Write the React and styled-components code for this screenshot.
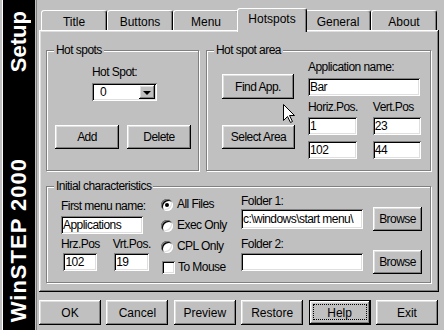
import React from 'react';
import styled, { createGlobalStyle, css } from 'styled-components';

const SANS = `"Liberation Sans", Arial, sans-serif`;
const NARROW = `"Liberation Sans Narrow", "Arial Narrow", "Liberation Sans", Arial, sans-serif`;

const GlobalStyle = createGlobalStyle`
  html, body { margin: 0; padding: 0; background: #c0c0c0; }
  body { font-family: ${SANS}; font-size: 12px; color: #000; }
  * { box-sizing: border-box; }
`;

const raised = css`
  box-shadow: inset -1px -1px #000, inset 1px 1px #fff, inset -2px -2px #808080, inset 2px 2px #dfdfdf;
`;
const sunken = css`
  box-shadow: inset 1px 1px #808080, inset -1px -1px #fff, inset 2px 2px #000, inset -2px -2px #dfdfdf;
`;
const small = css`
  font-family: ${NARROW};
  font-size: 12px;
  letter-spacing: -0.55px;
`;

const Window = styled.div`
  position: relative;
  width: 444px;
  height: 330px;
  display: flex;
  background: #c0c0c0;
  overflow: hidden;
`;

const SideBar = styled.div`
  margin-left: 2px;
  width: 33px;
  border-left: 1px solid #fff;
  background: #000;
  box-shadow: 1px 0 0 #c0c0c0, 2px 0 0 #808080;
  display: flex;
  flex-direction: column;
  justify-content: space-between;
  align-items: center;
  padding: 11px 0 8px;
`;

const SideText = styled.span`
  writing-mode: vertical-rl;
  transform: rotate(180deg);
  color: #fff;
  font: bold 22px/32px ${SANS};
  white-space: nowrap;
  letter-spacing: ${p => (p.$spaced ? '1px' : '0')};
`;

const Main = styled.div`
  margin-left: 4px;
  width: 400px;
  padding-top: 8px;
  display: flex;
  flex-direction: column;
`;

const TabRow = styled.div`
  height: 22px;
  display: flex;
  align-items: flex-end;
  padding-left: 2px;
`;

const Tab = styled.div`
  width: 66px;
  height: 20px;
  border: 1px solid;
  border-bottom: none;
  border-color: #fff #000 transparent #fff;
  border-radius: 3px 3px 0 0;
  box-shadow: inset -1px 0 #808080;
  background: #c0c0c0;
  text-align: center;
  padding-top: 4px;
  font: 12px/14px ${SANS};
  ${p => p.$active && css`
    position: relative;
    z-index: 1;
    width: 70px;
    height: 24px;
    margin: 0 -2px -2px;
    padding-top: 3px;
  `}
`;

const Panel = styled.div`
  height: 262px;
  background: #c0c0c0;
  ${raised};
  display: grid;
  grid-template-columns: 153px 225px;
  grid-template-rows: 121px 97px;
  column-gap: 7px;
  row-gap: 15px;
  padding: 20px 7px 0 7px;
`;

const Group = styled.div`
  position: relative;
  border: 1px solid #808080;
  box-shadow: inset 1px 1px #fff, 1px 1px #fff;
  ${p => p.$wide && css`grid-column: 1 / -1;`}
`;

const Caption = styled.span`
  position: absolute;
  top: -8px;
  left: 7px;
  padding: 0 2px;
  background: #c0c0c0;
  ${small};
  line-height: 15px;
  white-space: nowrap;
`;

const Label = styled.div`
  ${small};
  line-height: ${p => p.$lh || 15}px;
  white-space: nowrap;
`;

const Btn = styled.button`
  position: relative;
  width: ${p => p.$w}px;
  height: ${p => p.$h}px;
  margin: 0;
  padding: 0;
  border: none;
  background: #c0c0c0;
  ${raised};
  color: #000;
  font-family: ${SANS};
  font-size: 12px;
  flex: none;
  ${p => p.$narrow && small};
  ${p => p.$default && css`
    border: 1px solid #000;
    &::after {
      content: "";
      position: absolute;
      left: 3px;
      top: 3px;
      right: 3px;
      bottom: 4px;
      border: 1px dotted #000;
    }
  `}
`;

const Field = styled.input`
  display: block;
  width: ${p => p.$w}px;
  height: ${p => p.$h || 18}px;
  margin: ${p => p.$mt || 0}px 0 0;
  padding: 0 2px;
  border: none;
  outline: none;
  background: #fff;
  ${sunken};
  color: #000;
  ${small};
  flex: none;
`;

/* ---------- Hot spots group ---------- */
const HotSpotBody = styled.div`
  padding: 14px 0 0 8px;
  display: flex;
  flex-direction: column;
  align-items: flex-start;
`;

const ComboField = styled.div`
  margin-left: 37px;
`;

const Combo = styled.div`
  margin-top: 3px;
  width: 65px;
  height: 18px;
  padding: 2px;
  background: #fff;
  ${sunken};
  display: flex;
`;

const ComboValue = styled.span`
  flex: 1;
  padding-left: 6px;
  ${small};
  line-height: 14px;
`;

const ComboArrow = styled.span`
  width: 16px;
  height: 14px;
  background: #c0c0c0;
  ${raised};
  display: flex;
  align-items: center;
  justify-content: center;
  &::before {
    content: "";
    border-left: 4px solid transparent;
    border-right: 4px solid transparent;
    border-top: 4px solid #000;
    margin-top: 1px;
  }
`;

const ButtonRow = styled.div`
  display: flex;
  gap: 8px;
  margin-top: 24px;
`;

/* ---------- Hot spot area group ---------- */
const AreaBody = styled.div`
  display: grid;
  grid-template-columns: 73px 112px;
  column-gap: 13px;
  padding: 9px 0 0 15px;
`;

const AreaButtons = styled.div`
  display: flex;
  flex-direction: column;
  align-items: flex-start;
  gap: 26px;
  padding-top: 14px;
`;

const AreaFields = styled.div`
  display: flex;
  flex-direction: column;
`;

const PosGrid = styled.div`
  margin-top: 4px;
  display: flex;
  gap: 15px;
`;

const PosCol = styled.div`
  display: flex;
  flex-direction: column;
`;

/* ---------- Initial characteristics ---------- */
const InitBody = styled.div`
  display: flex;
  padding-left: 14px;
`;

const MenuCol = styled.div`
  width: 83px;
  padding-top: 12px;
  display: flex;
  flex-direction: column;
`;

const SubRow = styled.div`
  display: flex;
  gap: 13px;
  margin-top: 3px;
`;

const SubCol = styled.div`
  display: flex;
  flex-direction: column;
  align-items: center;
`;

const ChoiceCol = styled.div`
  width: 80px;
  margin-left: 17px;
  padding-top: 7px;
  display: flex;
  flex-direction: column;
`;

const Choice = styled.div`
  height: 21px;
  display: flex;
  align-items: center;
  gap: ${p => (p.$box ? 3 : 4)}px;
  padding-left: ${p => (p.$box ? 1 : 0)}px;
  ${small};
  line-height: 15px;
`;

const Radio = styled.span`
  position: relative;
  width: 12px;
  height: 12px;
  border-radius: 50%;
  background: #fff;
  ${sunken};
  flex: none;
  ${p => p.$checked && css`
    &::after {
      content: "";
      position: absolute;
      left: 4px;
      top: 4px;
      width: 4px;
      height: 4px;
      border-radius: 50%;
      background: #000;
    }
  `}
`;

const Check = styled.span`
  width: 13px;
  height: 13px;
  background: #fff;
  ${sunken};
  flex: none;
`;

const FolderCol = styled.div`
  padding-top: 8px;
  display: flex;
  flex-direction: column;
`;

const FolderRow = styled.div`
  height: 24px;
  display: flex;
  align-items: center;
  gap: 10px;
  margin-bottom: ${p => p.$mb || 0}px;
`;

/* ---------- bottom buttons ---------- */
const ButtonBar = styled.div`
  margin-top: 8px;
  padding-right: 1px;
  display: flex;
  justify-content: space-between;
`;

const Cursor = styled.svg`
  position: absolute;
  left: 283px;
  top: 104px;
  width: 13px;
  height: 20px;
  overflow: visible;
`;

const tabs = ['Title', 'Buttons', 'Menu', 'Hotspots', 'General', 'About'];
const bottom = ['OK', 'Cancel', 'Preview', 'Restore', 'Help', 'Exit'];

export default function App() {
  return (
    <>
      <GlobalStyle />
      <Window>
        <SideBar>
          <SideText>Setup</SideText>
          <SideText $spaced>WinSTEP 2000</SideText>
        </SideBar>
        <Main>
          <TabRow>
            {tabs.map(t => (
              <Tab key={t} $active={t === 'Hotspots'}>{t}</Tab>
            ))}
          </TabRow>
          <Panel>
            <Group>
              <Caption>Hot spots</Caption>
              <HotSpotBody>
                <ComboField>
                  <Label>Hot Spot:</Label>
                  <Combo>
                    <ComboValue>0</ComboValue>
                    <ComboArrow />
                  </Combo>
                </ComboField>
                <ButtonRow>
                  <Btn $w={64} $h={24} $narrow>Add</Btn>
                  <Btn $w={64} $h={24} $narrow>Delete</Btn>
                </ButtonRow>
              </HotSpotBody>
            </Group>

            <Group>
              <Caption>Hot spot area</Caption>
              <AreaBody>
                <AreaButtons>
                  <Btn $w={72} $h={25} $narrow>Find App.</Btn>
                  <Btn $w={73} $h={24} $narrow>Select Area</Btn>
                </AreaButtons>
                <AreaFields>
                  <Label>Application name:</Label>
                  <Field $w={112} $mt={3} readOnly value="Bar" />
                  <PosGrid>
                    <PosCol>
                      <Label>Horiz.Pos.</Label>
                      <Field $w={49} $mt={2} readOnly value="1" />
                      <Field $w={49} $mt={6} readOnly value="102" />
                    </PosCol>
                    <PosCol>
                      <Label>Vert.Pos</Label>
                      <Field $w={48} $mt={2} readOnly value="23" />
                      <Field $w={48} $mt={6} readOnly value="44" />
                    </PosCol>
                  </PosGrid>
                </AreaFields>
              </AreaBody>
            </Group>

            <Group $wide>
              <Caption>Initial characteristics</Caption>
              <InitBody>
                <MenuCol>
                  <Label>First menu name:</Label>
                  <Field $w={82} $mt={2} readOnly value="Applications" />
                  <SubRow>
                    <SubCol>
                      <Label>Hrz.Pos</Label>
                      <Field $w={34} $mt={1} readOnly value="102" />
                    </SubCol>
                    <SubCol>
                      <Label>Vrt.Pos.</Label>
                      <Field $w={35} $mt={1} readOnly value="19" />
                    </SubCol>
                  </SubRow>
                </MenuCol>
                <ChoiceCol>
                  <Choice><Radio $checked />All Files</Choice>
                  <Choice><Radio />Exec Only</Choice>
                  <Choice><Radio />CPL Only</Choice>
                  <Choice $box><Check />To Mouse</Choice>
                </ChoiceCol>
                <FolderCol>
                  <Label $lh={12}>Folder 1:</Label>
                  <FolderRow $mb={7}>
                    <Field $w={122} $h={20} readOnly value="c:\windows\start menu\" />
                    <Btn $w={49} $h={24} $narrow>Browse</Btn>
                  </FolderRow>
                  <Label $lh={12}>Folder 2:</Label>
                  <FolderRow>
                    <Field $w={122} readOnly value="" />
                    <Btn $w={49} $h={24} $narrow>Browse</Btn>
                  </FolderRow>
                </FolderCol>
              </InitBody>
            </Group>
          </Panel>
          <ButtonBar>
            {bottom.map(b => (
              <Btn key={b} $w={62} $h={25} $default={b === 'Help'}>{b}</Btn>
            ))}
          </ButtonBar>
        </Main>
        <Cursor viewBox="0 0 13 20">
          <path d="M0.5 0.5 V16.5 L4.5 12.5 L7.5 18.5 L9.5 17.5 L6.5 11.5 H11.5 Z" fill="#fff" stroke="#000" strokeWidth="1" />
        </Cursor>
      </Window>
    </>
  );
}
